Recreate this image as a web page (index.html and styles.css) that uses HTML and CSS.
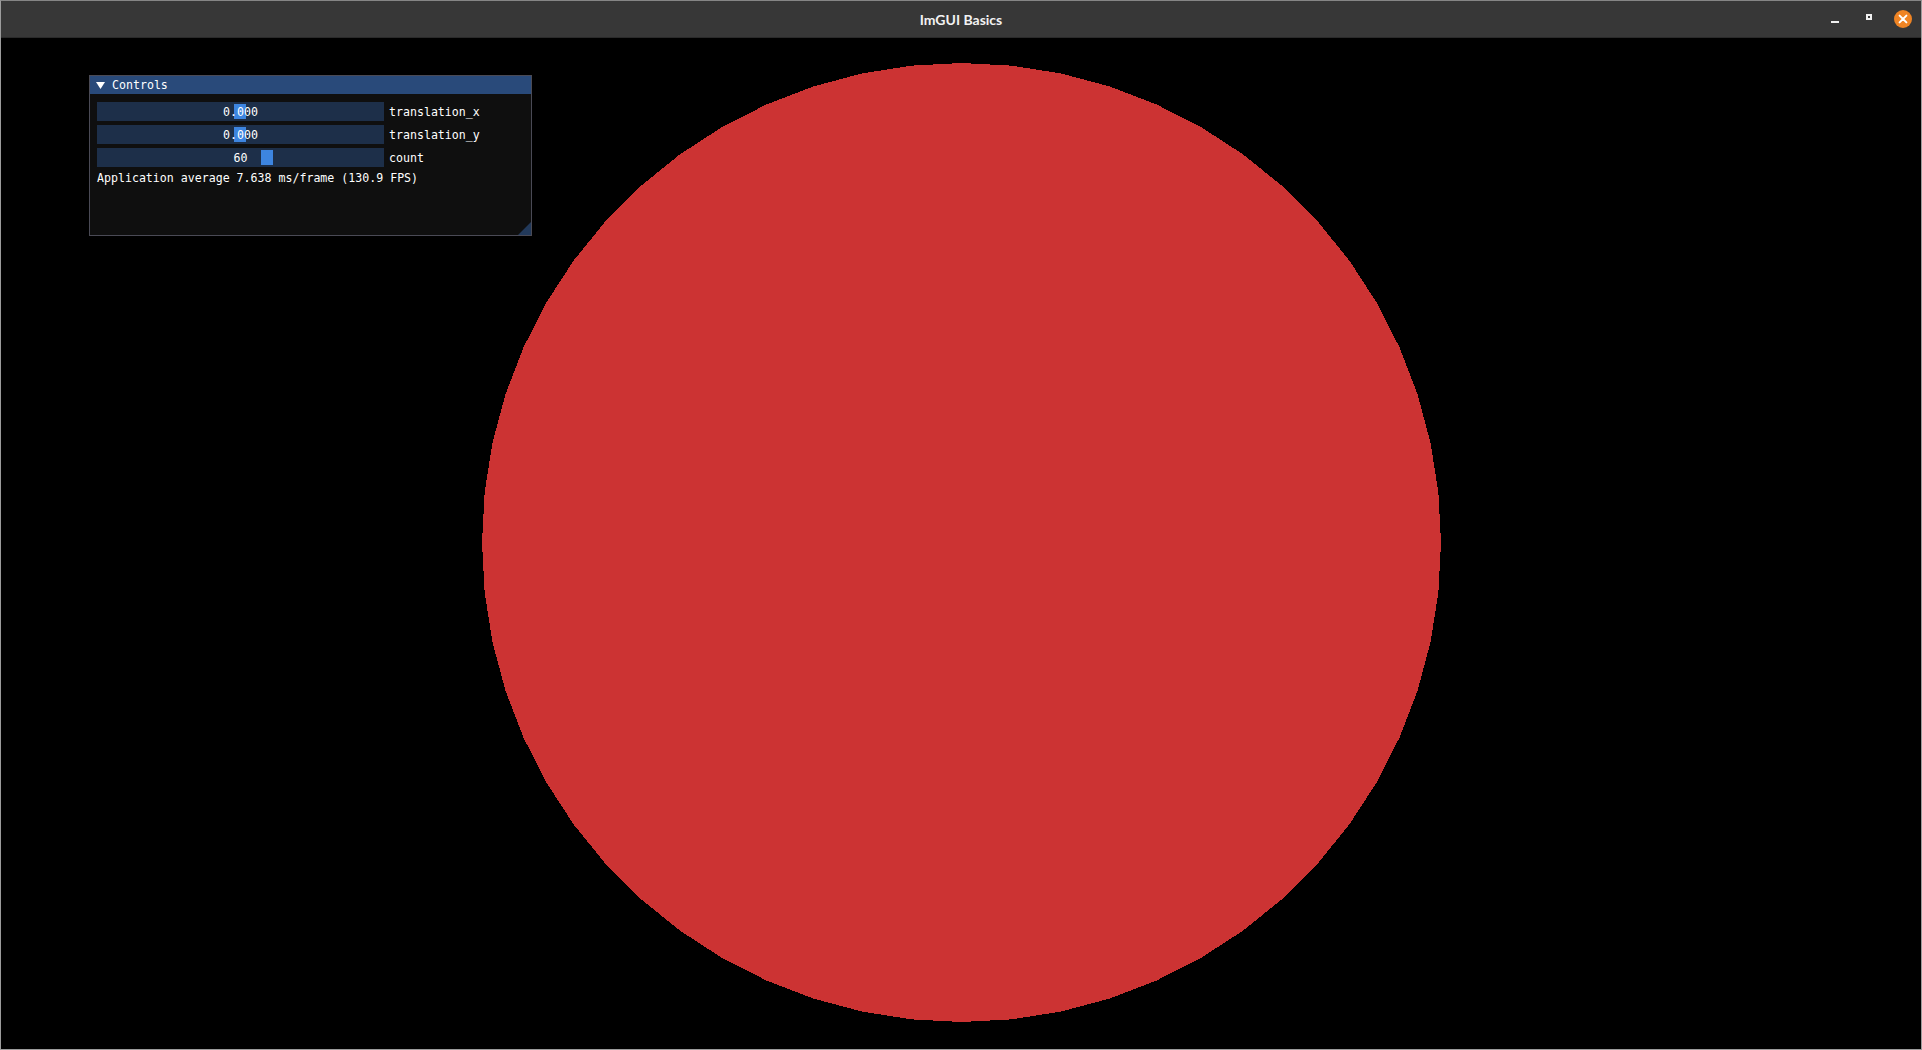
FILE: index.html
```html
<!DOCTYPE html>
<html>
<head>
<meta charset="utf-8">
<title>ImGUI Basics</title>
<link rel="stylesheet" href="styles.css">
</head>
<body>
<div class="window">
  <header class="titlebar">
    <div class="title">ImGUI Basics</div>
    <div class="wm-buttons">
      <span class="wm-min"></span>
      <span class="wm-max"></span>
      <span class="wm-close">
        <svg width="18" height="18" viewBox="0 0 18 18"><circle cx="9" cy="9" r="9" fill="#ef8424"/><path d="M5.6 5.6 L12.4 12.4 M12.4 5.6 L5.6 12.4" stroke="#fff" stroke-width="2" stroke-linecap="round"/></svg>
      </span>
    </div>
  </header>
  <main class="canvas">
    <svg class="scene" width="1920" height="1011" viewBox="0 0 1920 1011">
      <polygon transform="translate(960.5 504.5)" fill="#cc3333" shape-rendering="crispEdges" points="479.5,0 476.873,-50.121 469.022,-99.694 456.032,-148.174 438.045,-195.030 415.259,-239.75 387.924,-281.843 356.338,-320.848 320.848,-356.338 281.843,-387.924 239.75,-415.259 195.030,-438.045 148.174,-456.032 99.694,-469.022 50.121,-476.873 0,-479.5 -50.121,-476.873 -99.694,-469.022 -148.174,-456.032 -195.030,-438.045 -239.75,-415.259 -281.843,-387.924 -320.848,-356.338 -356.338,-320.848 -387.924,-281.843 -415.259,-239.75 -438.045,-195.030 -456.032,-148.174 -469.022,-99.694 -476.873,-50.121 -479.5,0 -476.873,50.121 -469.022,99.694 -456.032,148.174 -438.045,195.030 -415.259,239.75 -387.924,281.843 -356.338,320.848 -320.848,356.338 -281.843,387.924 -239.75,415.259 -195.030,438.045 -148.174,456.032 -99.694,469.022 -50.121,476.873 0,479.5 50.121,476.873 99.694,469.022 148.174,456.032 195.030,438.045 239.75,415.259 281.843,387.924 320.848,356.338 356.338,320.848 387.924,281.843 415.259,239.75 438.045,195.030 456.032,148.174 469.022,99.694 476.873,50.121"/>
    </svg>
    <section class="imgui-win">
      <div class="imgui-title">
        <svg class="arrow" width="9" height="7" viewBox="0 0 9 7"><polygon points="0,0 9,0 4.5,7" fill="#fff"/></svg>
        <span>Controls</span>
      </div>
      <div class="imgui-body">
        <div class="row">
          <div class="slider"><span class="grab" style="left:137px"></span><span class="val">0.000</span></div>
          <span class="label">translation_x</span>
        </div>
        <div class="row">
          <div class="slider"><span class="grab" style="left:137px"></span><span class="val">0.000</span></div>
          <span class="label">translation_y</span>
        </div>
        <div class="row">
          <div class="slider"><span class="grab" style="left:164px"></span><span class="val">60</span></div>
          <span class="label">count</span>
        </div>
        <div class="text">Application average 7.638 ms/frame (130.9 FPS)</div>
      </div>
      <span class="grip"></span>
    </section>
  </main>
</div>
</body>
</html>
```
FILE: styles.css
```css
* { box-sizing: border-box; }
html, body { margin: 0; padding: 0; background: #000; }
.window {
  width: 1922px;
  height: 1050px;
  border: 1px solid #9c9c9c;
  border-top-color: #858585;
  display: flex;
  flex-direction: column;
  overflow: hidden;
  background: #000;
}
.titlebar {
  height: 37px;
  flex: none;
  background: #373737;
  border-bottom: 1px solid #2a2a2a;
  position: relative;
  display: flex;
  align-items: center;
  justify-content: center;
}
.title {
  font-family: Lato, "Open Sans", sans-serif;
  font-weight: 700;
  font-size: 14px;
  color: #f2f2f2;
  padding-top: 1px;
}
.wm-buttons {
  position: absolute;
  right: 9px;
  top: 9px;
  display: flex;
  align-items: center;
  height: 18px;
}
.wm-min {
  width: 8px;
  height: 2px;
  background: #f0f0f0;
  margin-top: 5px;
  margin-right: 27px;
}
.wm-max {
  width: 6px;
  height: 6px;
  border: 2px solid #f0f0f0;
  margin-top: -4px;
  margin-right: 22px;
}
.wm-close { display: block; width: 18px; height: 18px; }
.wm-close svg { display: block; }

.canvas {
  position: relative;
  flex: 1;
}
.scene { position: absolute; left: 0; top: 0; display: block; }

.imgui-win {
  position: absolute;
  left: 88px;
  top: 37px;
  width: 443px;
  height: 161px;
  background: #0f0f0f;
  border: 1px solid #4a4a55;
  font-family: "DejaVu Sans Mono", "Liberation Mono", monospace;
  font-size: 11.6px;
  line-height: 13px;
  color: #fff;
}
.imgui-title {
  height: 18px;
  background: #294a7a;
  display: flex;
  align-items: center;
  padding-left: 6px;
  gap: 7px;
}
.imgui-title .arrow { display: block; }
.imgui-body {
  padding: 8px 7px 0 7px;
  display: flex;
  flex-direction: column;
  gap: 4px;
}
.row {
  display: flex;
  align-items: center;
  gap: 4px;
  height: 19px;
}
.slider {
  position: relative;
  width: 287px;
  height: 19px;
  background: #1d2f49;
  display: flex;
  align-items: center;
  justify-content: center;
}
.grab {
  position: absolute;
  top: 2px;
  width: 12px;
  height: 15px;
  background: #3d85e0;
}
.val { position: relative; padding-top: 2px; }
.label { padding-left: 1px; padding-top: 2px; }
.text { height: 14px; padding-top: 1px; white-space: pre; }
.grip {
  position: absolute;
  right: 0;
  bottom: 0;
  width: 0;
  height: 0;
  border-style: solid;
  border-width: 0 0 13px 13px;
  border-color: transparent transparent #22395a transparent;
}
```
